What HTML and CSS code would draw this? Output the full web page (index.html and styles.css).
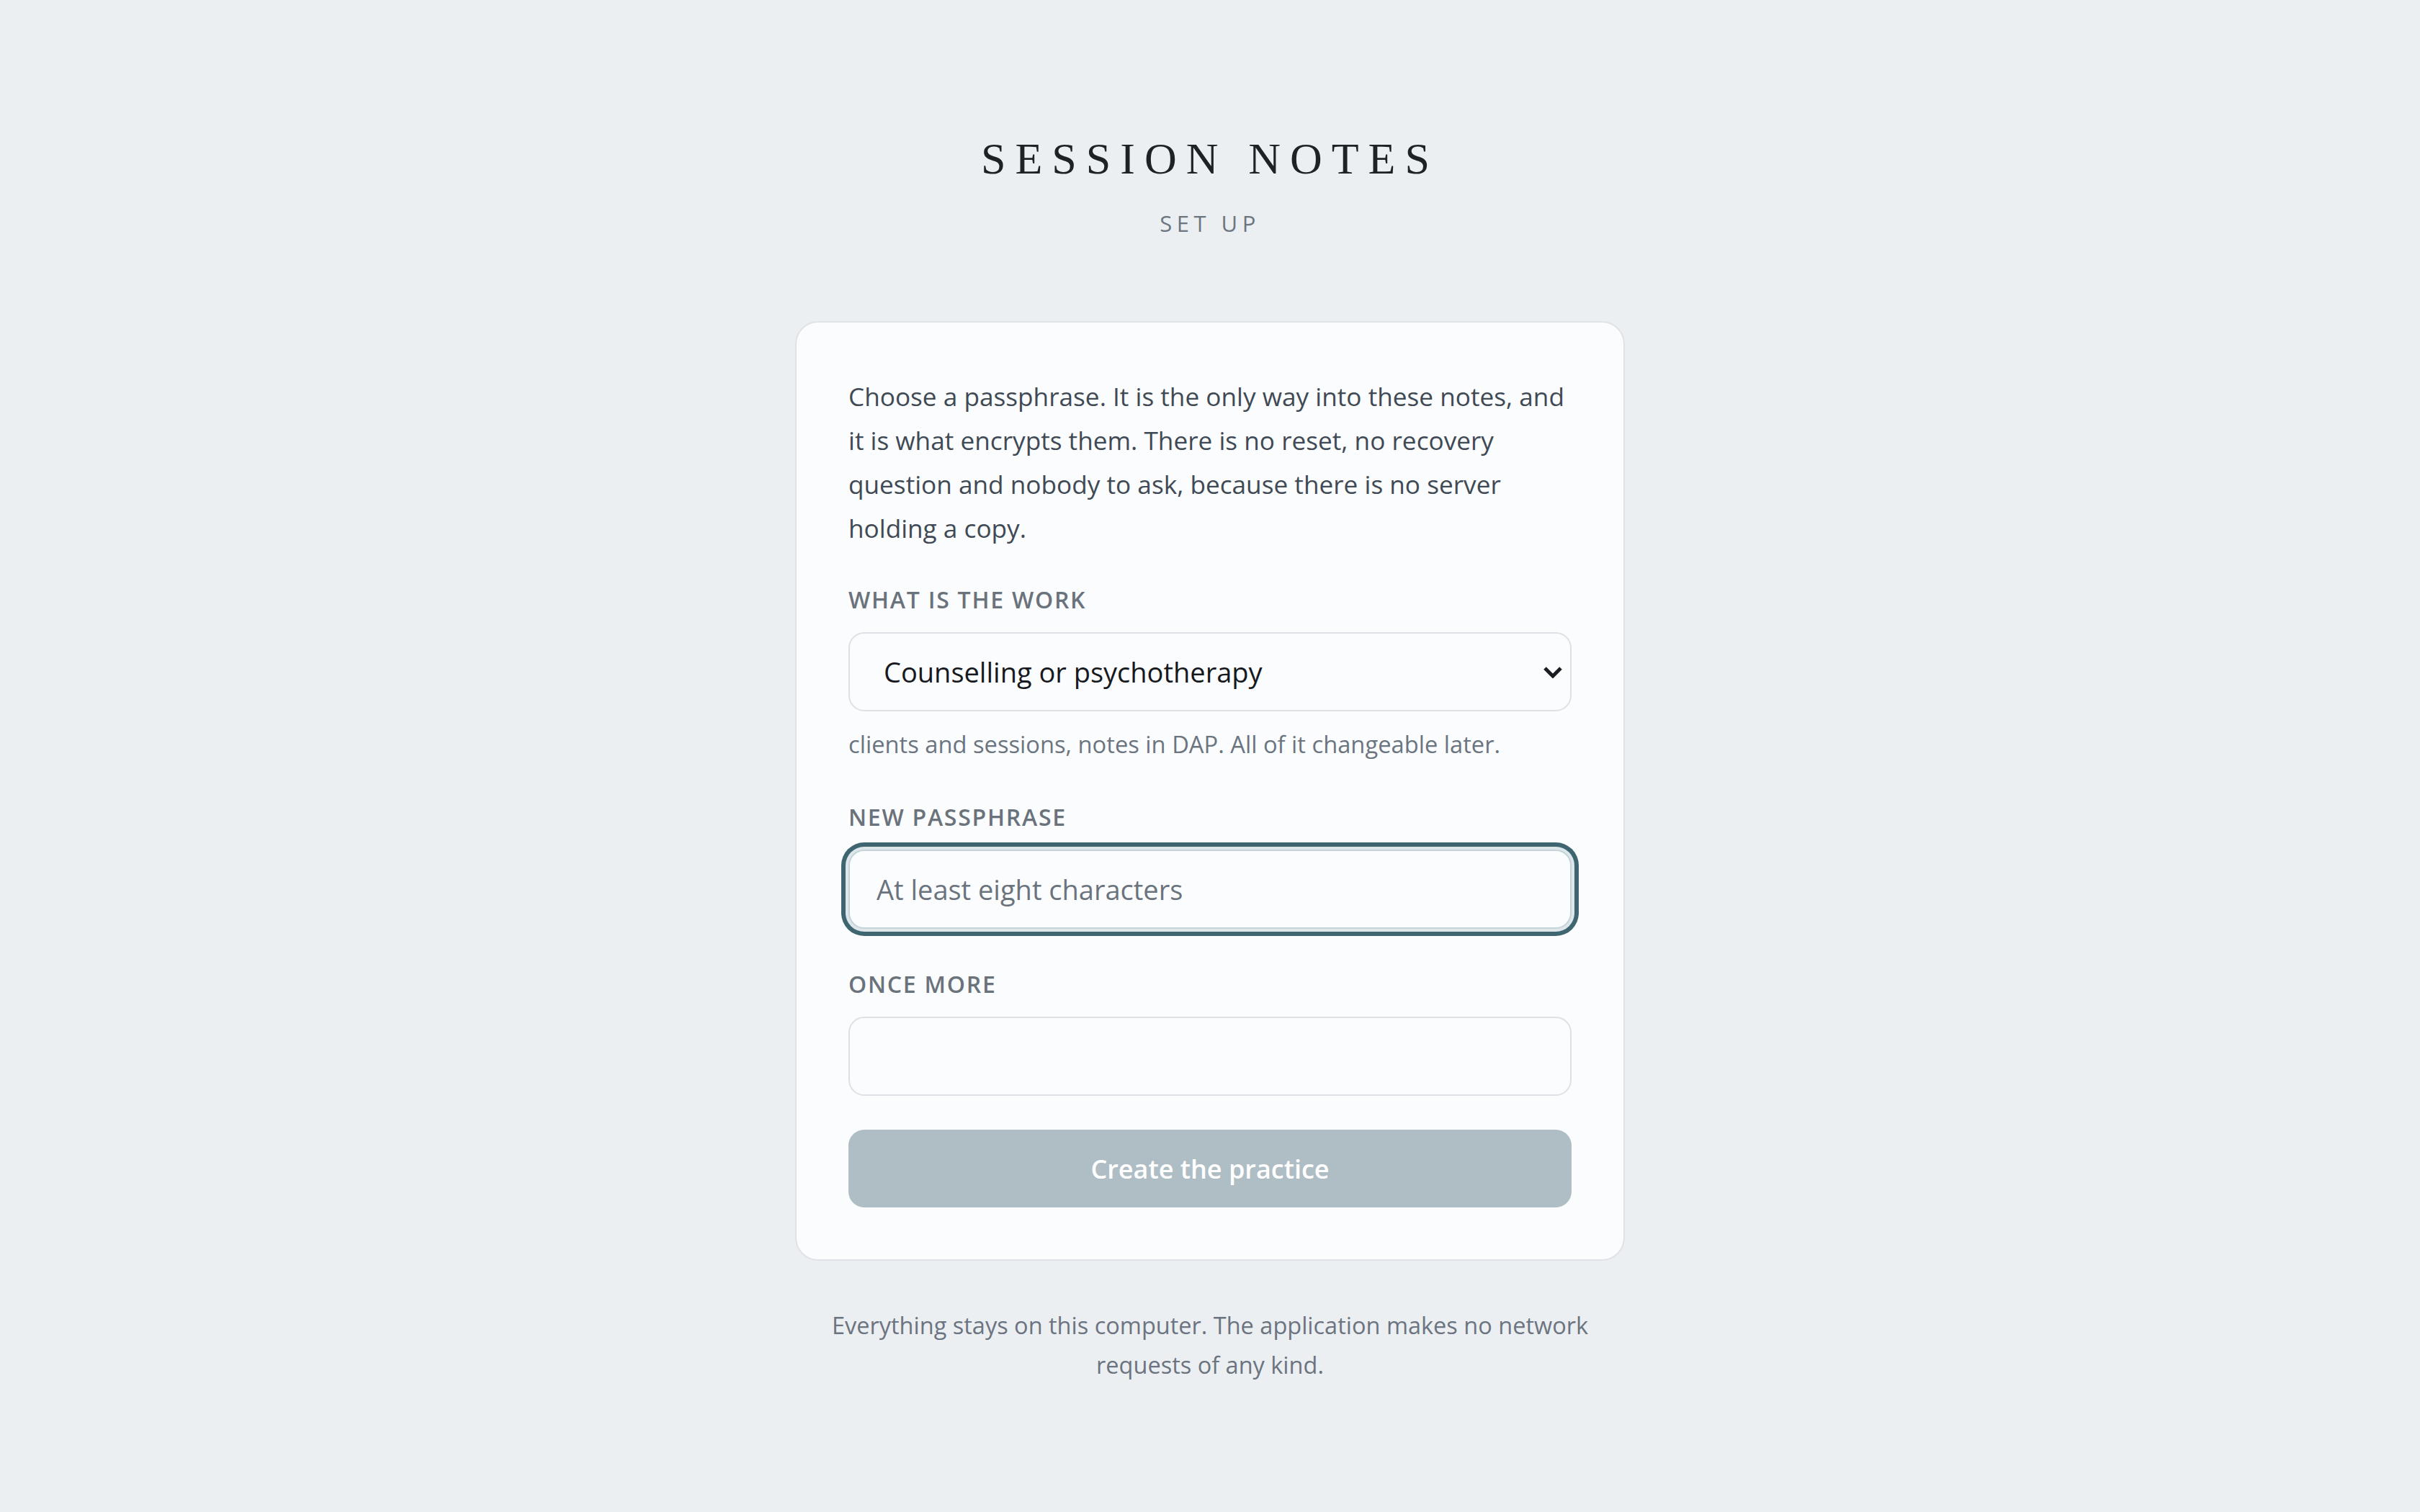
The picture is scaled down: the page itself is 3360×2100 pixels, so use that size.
FILE: index.html
```html
<!DOCTYPE html>
<html lang="en">
<head>
<meta charset="utf-8">
<title>Session Notes — Set up</title>
<link rel="stylesheet" href="styles.css">
</head>
<body>
<main class="page">
  <header class="brand">
    <h1 class="brand-title">SESSION NOTES</h1>
    <p class="brand-sub">SET UP</p>
  </header>

  <section class="card">
    <p class="intro">Choose a passphrase. It is the only way into these notes, and it is what encrypts them. There is no reset, no recovery question and nobody to ask, because there is no server holding a copy.</p>

    <div class="field">
      <label class="field-label" for="work">WHAT IS THE WORK</label>
      <div class="select-wrap">
        <select id="work" class="control control-select">
          <option>Counselling or psychotherapy</option>
          <option>Coaching</option>
          <option>Supervision</option>
        </select>
        <svg class="chevron" width="28" height="17" viewBox="0 0 28 17" aria-hidden="true">
          <polyline points="3,3 14,14 25,3" fill="none" stroke="#1a1d21" stroke-width="5" stroke-linecap="butt" stroke-linejoin="miter"/>
        </svg>
      </div>
      <p class="hint">clients and sessions, notes in DAP. All of it changeable later.</p>
    </div>

    <div class="field">
      <label class="field-label" for="pass">NEW PASSPHRASE</label>
      <input id="pass" class="control is-focused" type="password" placeholder="At least eight characters" autofocus>
    </div>

    <div class="field field-last">
      <label class="field-label" for="again">ONCE MORE</label>
      <input id="again" class="control" type="password">
    </div>

    <button class="primary" type="button" disabled>Create the practice</button>
  </section>

  <p class="footnote">Everything stays on this computer. The application makes no network requests of any kind.</p>
</main>
</body>
</html>
```

FILE: styles.css
```css
* {
  box-sizing: border-box;
}

html,
body {
  margin: 0;
  padding: 0;
}

body {
  background: #eceff1;
  color: #414b56;
  font-family: "Open Sans", "Noto Sans", sans-serif;
  min-height: 100vh;
}

.page {
  display: flex;
  flex-direction: column;
  align-items: center;
  padding: 185px 32px 120px;
}

.brand {
  display: flex;
  flex-direction: column;
  align-items: center;
}

.brand-title {
  margin: 0 0 32px;
  font-family: "Liberation Serif", "DejaVu Serif", serif;
  font-weight: 400;
  font-size: 62px;
  line-height: 1.15;
  letter-spacing: 0.21em;
  color: #1d2227;
}

.brand-sub {
  margin: 0 0 113px;
  font-size: 31px;
  line-height: 45px;
  letter-spacing: 0.21em;
  color: #6c7680;
}

.card {
  width: 1152px;
  background: #fbfcfd;
  border: 2px solid #dfe3e7;
  border-radius: 32px;
  padding: 72px;
  display: flex;
  flex-direction: column;
}

.intro {
  margin: 0 0 47px;
  font-size: 35.2px;
  line-height: 61px;
  color: #404a55;
}

.field {
  display: flex;
  flex-direction: column;
  margin-bottom: 55px;
}

.field-last {
  margin-bottom: 47px;
}

.field-label {
  display: block;
  margin: 0 0 23px;
  font-size: 32px;
  font-weight: 600;
  line-height: 44px;
  letter-spacing: 0.055em;
  color: #6a727b;
}

.select-wrap {
  position: relative;
}

.control {
  display: block;
  width: 100%;
  height: 110px;
  margin: 0;
  padding: 0 37px;
  border: 2px solid #dde1e6;
  border-radius: 22px;
  background: #fbfcfd;
  font-family: "Open Sans", "Noto Sans", sans-serif;
  font-size: 38px;
  color: #16191d;
  outline: none;
}

.control::placeholder {
  color: #6b737d;
  opacity: 1;
}

.control-select {
  -webkit-appearance: none;
  appearance: none;
  padding: 0 80px 0 47px;
  cursor: pointer;
}

.chevron {
  position: absolute;
  right: 12px;
  top: 50%;
  width: 28px;
  height: 17px;
  margin-top: -8px;
  pointer-events: none;
}

.control.is-focused,
.control:focus {
  border-color: #c3d3d9;
  box-shadow: 0 0 0 4px #dde7ea, 0 0 0 10px #3f6570;
  caret-color: #16191d;
}

.hint {
  margin: 22px 0 0;
  font-size: 32.7px;
  line-height: 48px;
  color: #6b7580;
}

.primary {
  display: block;
  width: 100%;
  height: 108px;
  border: 0;
  border-radius: 22px;
  background: #afbec5;
  color: #ffffff;
  font-family: "Open Sans", "Noto Sans", sans-serif;
  font-size: 36px;
  font-weight: 600;
  cursor: not-allowed;
}

.footnote {
  width: 1152px;
  margin: 62px 0 0;
  font-size: 32.5px;
  line-height: 55px;
  text-align: center;
  color: #6b7480;
}
```
